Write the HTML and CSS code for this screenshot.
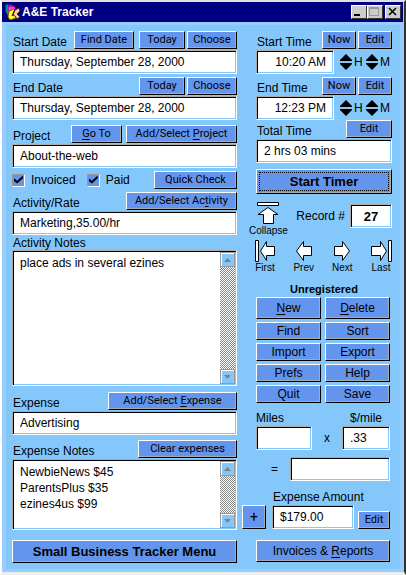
FILE: index.html
```html
<!DOCTYPE html>
<html lang="en">
<head>
<meta charset="utf-8">
<title>A&amp;E Tracker</title>
<link rel="stylesheet" href="styles.css">
</head>
<body>
<div class="window">
  <header class="titlebar">
    <svg class="app-icon" width="16" height="16" viewBox="0 0 16 16" aria-hidden="true">
      <path d="M1 1h6l2 3v7H3L1 8z" fill="#0cc" stroke="#066"/>
      <path d="M3 2h6l2 3v6H5L3 9z" fill="#f3f" stroke="#606"/>
      <path d="M4 7l5-2 3 4-1 5-6 2-2-3z" fill="#ff2" stroke="#660"/>
      <path d="M8 11l2-5 4-2 1 3-3 3 3 3-3 2-2-3z" fill="#fca" stroke="#421"/>
      <path d="M12 1l-5 11" stroke="#300" fill="none"/>
    </svg>
    <h1>A&amp;E Tracker</h1>
    <div class="caption">
      <button class="cap" aria-label="Minimize"><svg width="12" height="12"><path d="M2 8h6v2H2z"/></svg></button>
      <button class="cap" aria-label="Maximize" disabled><svg width="12" height="12"><path d="M1.500 1.500h9v8h-9zM1 2.500h10" fill="none" stroke="#999"/></svg></button>
      <button class="cap cap-close" aria-label="Close"><svg width="12" height="12"><path d="M3 2l7 7M10 2l-7 7" fill="none" stroke="#000" stroke-width="1.500"/></svg></button>
    </div>
  </header>

  <main class="panel">
    <section class="left">
      <div class="group">
        <div class="head"><label for="sd">Start Date</label>
          <button class="btn w-find">Find Date</button><button class="btn w-today">Today</button><button class="btn w-choose">Choose</button></div>
        <input class="field" id="sd" value="Thursday, September 28, 2000">
      </div>
      <div class="group group-dates">
        <div class="head"><label for="ed">End Date</label>
          <button class="btn w-today">Today</button><button class="btn w-choose">Choose</button></div>
        <input class="field" id="ed" value="Thursday, September 28, 2000">
      </div>
      <div class="group">
        <div class="head head-wide"><label for="pr">Project</label>
          <button class="btn w-go"><u>G</u>o To</button><button class="btn w-add">Add/Select <u>P</u>roject</button></div>
        <input class="field" id="pr" value="About-the-web">
      </div>
      <div class="checks">
        <label class="check"><input type="checkbox" checked>Invoiced</label>
        <label class="check"><input type="checkbox" checked>Paid</label>
        <button class="btn w-quick">Quick Check</button>
      </div>
      <div class="group group-activity">
        <div class="head"><label for="ac">Activity/Rate</label>
          <button class="btn w-add">Add/Select Ac<u>t</u>ivity</button></div>
        <input class="field" id="ac" value="Marketing,35.00/hr">
      </div>
      <label class="notes-label" for="an">Activity Notes</label>
      <div class="notes notes-tall">
        <textarea id="an">place ads in several ezines</textarea>
        <div class="scroll">
          <button aria-label="Scroll notes up"><svg width="7" height="4"><path d="M0 4L3.500 0 7 4z"/></svg></button>
          <button aria-label="Scroll notes down"><svg width="7" height="4"><path d="M0 0L3.500 4 7 0z"/></svg></button>
        </div>
      </div>
      <div class="group group-expense">
        <div class="head"><label for="ex">Expense</label>
          <button class="btn w-expense">Add/Select <u>E</u>xpense</button></div>
        <input class="field" id="ex" value="Advertising">
      </div>
      <div class="group">
        <div class="head"><label for="en">Expense Notes</label>
          <button class="btn w-clear">Clear expenses</button></div>
        <div class="notes notes-short">
          <textarea id="en">NewbieNews $45
ParentsPlus $35
ezines4us $99</textarea>
          <div class="scroll">
            <button aria-label="Scroll expenses up"><svg width="7" height="4"><path d="M0 4L3.500 0 7 4z"/></svg></button>
            <button aria-label="Scroll expenses down"><svg width="7" height="4"><path d="M0 0L3.500 4 7 0z"/></svg></button>
          </div>
        </div>
      </div>
      <button class="btn btn-bold btn-menu">Small Business Tracker Menu</button>
    </section>

    <section class="right">
      <div class="group inset">
        <div class="head"><label for="st">Start Time</label>
          <button class="btn w-now">Now</button><button class="btn w-now">Edit</button></div>
        <div class="time">
          <input class="field" id="st" value="10:20 AM">
          <div class="spin"><button aria-label="Start hour up"><svg width="12" height="7"><path d="M0 6L6 0l6 6v1H0z"/></svg></button><button aria-label="Start hour down"><svg width="12" height="7"><path d="M0 1L6 7l6-6V0H0z"/></svg></button></div><span>H</span>
          <div class="spin"><button aria-label="Start minute up"><svg width="12" height="7"><path d="M0 6L6 0l6 6v1H0z"/></svg></button><button aria-label="Start minute down"><svg width="12" height="7"><path d="M0 1L6 7l6-6V0H0z"/></svg></button></div><span>M</span>
        </div>
      </div>
      <div class="group inset">
        <div class="head"><label for="et">End Time</label>
          <button class="btn w-now">Now</button><button class="btn w-now">Edit</button></div>
        <div class="time">
          <input class="field" id="et" value="12:23 PM">
          <div class="spin"><button aria-label="End hour up"><svg width="12" height="7"><path d="M0 6L6 0l6 6v1H0z"/></svg></button><button aria-label="End hour down"><svg width="12" height="7"><path d="M0 1L6 7l6-6V0H0z"/></svg></button></div><span>H</span>
          <div class="spin"><button aria-label="End minute up"><svg width="12" height="7"><path d="M0 6L6 0l6 6v1H0z"/></svg></button><button aria-label="End minute down"><svg width="12" height="7"><path d="M0 1L6 7l6-6V0H0z"/></svg></button></div><span>M</span>
        </div>
      </div>
      <div class="group group-total inset">
        <div class="head"><label for="tt">Total Time</label><button class="btn w-today">Edit</button></div>
        <input class="field" id="tt" value="2 hrs 03 mins">
      </div>
      <div class="inset timer"><button class="btn btn-bold btn-timer">Start Timer</button></div>

      <div class="record">
        <button class="nav"><svg width="24" height="24" viewBox="0 0 24 24"><path d="M1.500 1.500h21v3h-21zM12 6.500L22 13.500H17.500V22.500H7.500V13.500H2z"/></svg>Collapse</button>
        <label for="rn">Record #</label>
        <input class="field" id="rn" value="27">
      </div>
      <nav class="arrows">
        <button class="nav"><svg width="22" height="22" viewBox="0 0 22 22"><path d="M1.500.500h3v21h-3zM6.500 11L12.500 1.500V6.500H20.500V15.500H12.500V20.500z"/></svg>First</button>
        <button class="nav"><svg width="22" height="22" viewBox="0 0 22 22"><path d="M3.500 11L10.500 1.500V6.500H18.500V15.500H10.500V20.500z"/></svg>Prev</button>
        <button class="nav"><svg width="22" height="22" viewBox="0 0 22 22"><path d="M18.500 11L11.500 1.500V6.500H3.500V15.500H11.500V20.500z"/></svg>Next</button>
        <button class="nav"><svg width="22" height="22" viewBox="0 0 22 22"><path d="M18.500.500h3v21h-3zM16.500 11L10.500 1.500V6.500H1.500V15.500H10.500V20.500z"/></svg>Last</button>
      </nav>
      <p class="status">Unregistered</p>

      <div class="commands">
        <button class="btn btn-lg btn-tall"><u>N</u>ew</button><button class="btn btn-lg btn-tall"><u>D</u>elete</button>
        <button class="btn btn-lg">Find</button><button class="btn btn-lg">Sort</button>
        <button class="btn btn-lg">Import</button><button class="btn btn-lg">Export</button>
        <button class="btn btn-lg">Prefs</button><button class="btn btn-lg">Help</button>
        <button class="btn btn-lg">Quit</button><button class="btn btn-lg">Save</button>
      </div>

      <div class="miles">
        <label for="mi">Miles</label><span></span><label for="pm">$/mile</label>
        <input class="field" id="mi" value=""><span>x</span><input class="field" id="pm" value=".33">
      </div>
      <div class="product"><label for="eq">=</label><input class="field" id="eq" value=""></div>
      <div class="amount">
        <label for="am">Expense Amount</label>
        <div class="amount-row">
          <button class="btn btn-plus">+</button>
          <input class="field" id="am" value="$179.00">
          <button class="btn btn-edit">Edit</button>
        </div>
      </div>
      <button class="btn btn-lg btn-reports">Invoices &amp; <u>R</u>eports</button>
    </section>
  </main>
</div>
</body>
</html>
```
FILE: styles.css
```css
* { box-sizing: border-box; }

body {
  margin: 0;
  background: #fff;
  color: #000;
  font: 12px/14px "Liberation Sans", Arial, sans-serif;
}

button, input, textarea { font: inherit; color: inherit; margin: 0; min-width: 0; }
button { padding: 0; white-space: nowrap; }
label { white-space: nowrap; }
svg { display: block; }
u { text-underline-offset: 2px; }

.window {
  border: 2px solid #fff;
  border-top-color: #e0e0e0;
  border-right: 2px solid #333;
  border-bottom: 3px solid #eee;
  background: #99ccff;
  padding-right: 1px;
}

.titlebar {
  display: flex;
  align-items: center;
  height: 20px;
  padding: 0 2px 0 3px;
  background: repeating-conic-gradient(#000090 0 25%, #000074 0 50%) 0 0 / 4px 4px;
  color: #fff;
}
.titlebar h1 { flex: 1; margin: 0 0 0 1px; font-size: 12px; line-height: 14px; }
.caption { display: flex; }
.cap {
  width: 16px;
  height: 14px;
  background: #ccc;
  border: 1px solid;
  border-color: #fff #333 #333 #fff;
}
.cap-close { margin-left: 2px; }

.panel {
  display: grid;
  grid-template-columns: 1fr 150px;
  gap: 5px;
  margin: 3px 3px 3px 4px;
  padding: 6px 8px 6px 6px;
  background: #84c8fb;
}
.left, .right { display: flex; flex-direction: column; min-width: 0; }

.group { margin-bottom: 3px; }
.group-dates { margin-bottom: 5px; }
.inset { padding-left: 14px; }
.head { display: flex; align-items: center; gap: 2px; height: 18px; margin-bottom: 1px; }
.head-wide { gap: 4px; }
.head label { margin-right: auto; padding: 4px 0 0 1px; }

.btn {
  height: 18px;
  background: #6495ed;
  border: 1px solid;
  border-color: #fff #000 #000 #fff;
  box-shadow: inset -1px -1px #aaa;
  font: 11px/14px Roboto, "Liberation Sans", sans-serif;
}
.btn-lg, .btn-bold { font: 13px/14px "Liberation Sans", Arial, sans-serif; }
.btn-lg { font-size: 12px; }
.btn-bold { font-weight: bold; }
.w-find { width: 60px; margin-right: 3px; }
.w-today { width: 46px; }
.w-choose { width: 50px; }
.w-go { width: 51px; }
.w-add { width: 111px; }
.w-quick { width: 83px; }
.w-expense { width: 129px; }
.w-clear { width: 99px; }
.w-now { width: 34px; }

.field, .notes {
  width: 100%;
  background: #fff;
  border: 1px solid;
  border-color: #aaa #fff #fff #aaa;
  border-radius: 0;
  box-shadow: inset 1px 1px #000, inset -1px -1px #84c8fb;
}
.field { display: block; height: 24px; padding: 0 7px; }

.checks { display: flex; align-items: center; height: 18px; margin-bottom: 3px; }
.check { display: flex; align-items: center; gap: 6px; margin-right: 11px; }
.check input {
  appearance: none;
  width: 13px;
  height: 13px;
  background: #6495ed;
  border: 1px solid;
  border-color: #999 #fff #fff #999;
}
.check input:checked::after {
  content: "";
  display: block;
  width: 9px;
  height: 8px;
  margin: 1px;
  background: #000;
  clip-path: polygon(0 35%, 35% 65%, 100% 0, 100% 35%, 35% 100%, 0 70%);
}
.checks .btn { margin-left: auto; }

.group-activity { margin-bottom: 1px; }
.notes-label { padding-left: 1px; }
.notes { display: flex; padding: 1px; }
.notes textarea {
  flex: 1;
  padding: 3px 6px;
  background: none;
  border: 0;
  outline: 0;
  resize: none;
  overflow: hidden;
  line-height: 16px;
}
.notes-tall { height: 136px; margin-bottom: 6px; }
.notes-short { height: 71px; }
.group-expense { margin-bottom: 5px; }

.scroll {
  display: flex;
  flex-direction: column;
  justify-content: space-between;
  width: 15px;
  background: repeating-conic-gradient(#888 0 25%, #fff 0 50%) 0 0 / 2px 2px;
}
.scroll button {
  display: grid;
  place-items: center;
  height: 15px;
  background: #84c8fb;
  border: 1px solid #999;
  box-shadow: inset 1px 1px #fff;
}
.scroll path { fill: #808080; }
.btn-menu { height: 23px; margin-top: 7px; }

.time { display: flex; align-items: center; }
.time .field { width: 78px; margin-right: 6px; text-align: right; }
.time span { width: 14px; padding-left: 2px; }
.spin { display: grid; gap: 2px; width: 12px; }
.spin button { background: none; border: 0; }
.group-total { margin: -3px 0 6px; }
.btn-timer {
  width: 100%;
  height: 25px;
  outline: 1px dotted #000;
  outline-offset: -4px;
}

.nav {
  display: flex;
  flex-direction: column;
  align-items: center;
  background: none;
  border: 0;
  font-size: 10px;
  line-height: 12px;
}
.nav path { fill: #fff; stroke: #000; }
.record { display: flex; align-items: center; margin-top: 7px; padding-left: 7px; }
.record label { margin: 0 5px 6px auto; }
.record .field { width: 42px; margin-bottom: 6px; text-align: center; font-size: 13px; font-weight: bold; }
.arrows { display: flex; justify-content: space-between; margin-top: 3px; padding-left: 12px; }
.status { margin: 8px 0 1px 14px; font-size: 11px; font-weight: bold; text-align: center; }

.commands {
  display: grid;
  grid-template-columns: 1fr 1fr;
  gap: 3px 4px;
  padding: 0 2px 0 14px;
}
.btn-tall { height: 22px; }

.miles {
  display: grid;
  grid-template-columns: 56px 1fr 48px;
  row-gap: 1px;
  align-items: center;
  margin-top: 8px;
  padding: 0 2px 0 14px;
  text-align: center;
}
.miles label:first-child { text-align: left; }
.product { display: flex; align-items: center; justify-content: flex-end; gap: 12px; margin-top: 7px; padding-right: 2px; }
.product .field { width: 100px; }
.amount { margin-top: 9px; padding-right: 2px; }
.amount label { display: block; margin: 0 0 1px 31px; }
.amount-row { display: flex; align-items: center; }
.btn-plus { flex: none; width: 24px; height: 24px; margin-right: 6px; font-size: 14px; }
.btn-edit { flex: none; width: 32px; margin-left: 4px; align-self: flex-end; }
.btn-reports { height: 22px; margin: 11px 2px 0 14px; }
```
